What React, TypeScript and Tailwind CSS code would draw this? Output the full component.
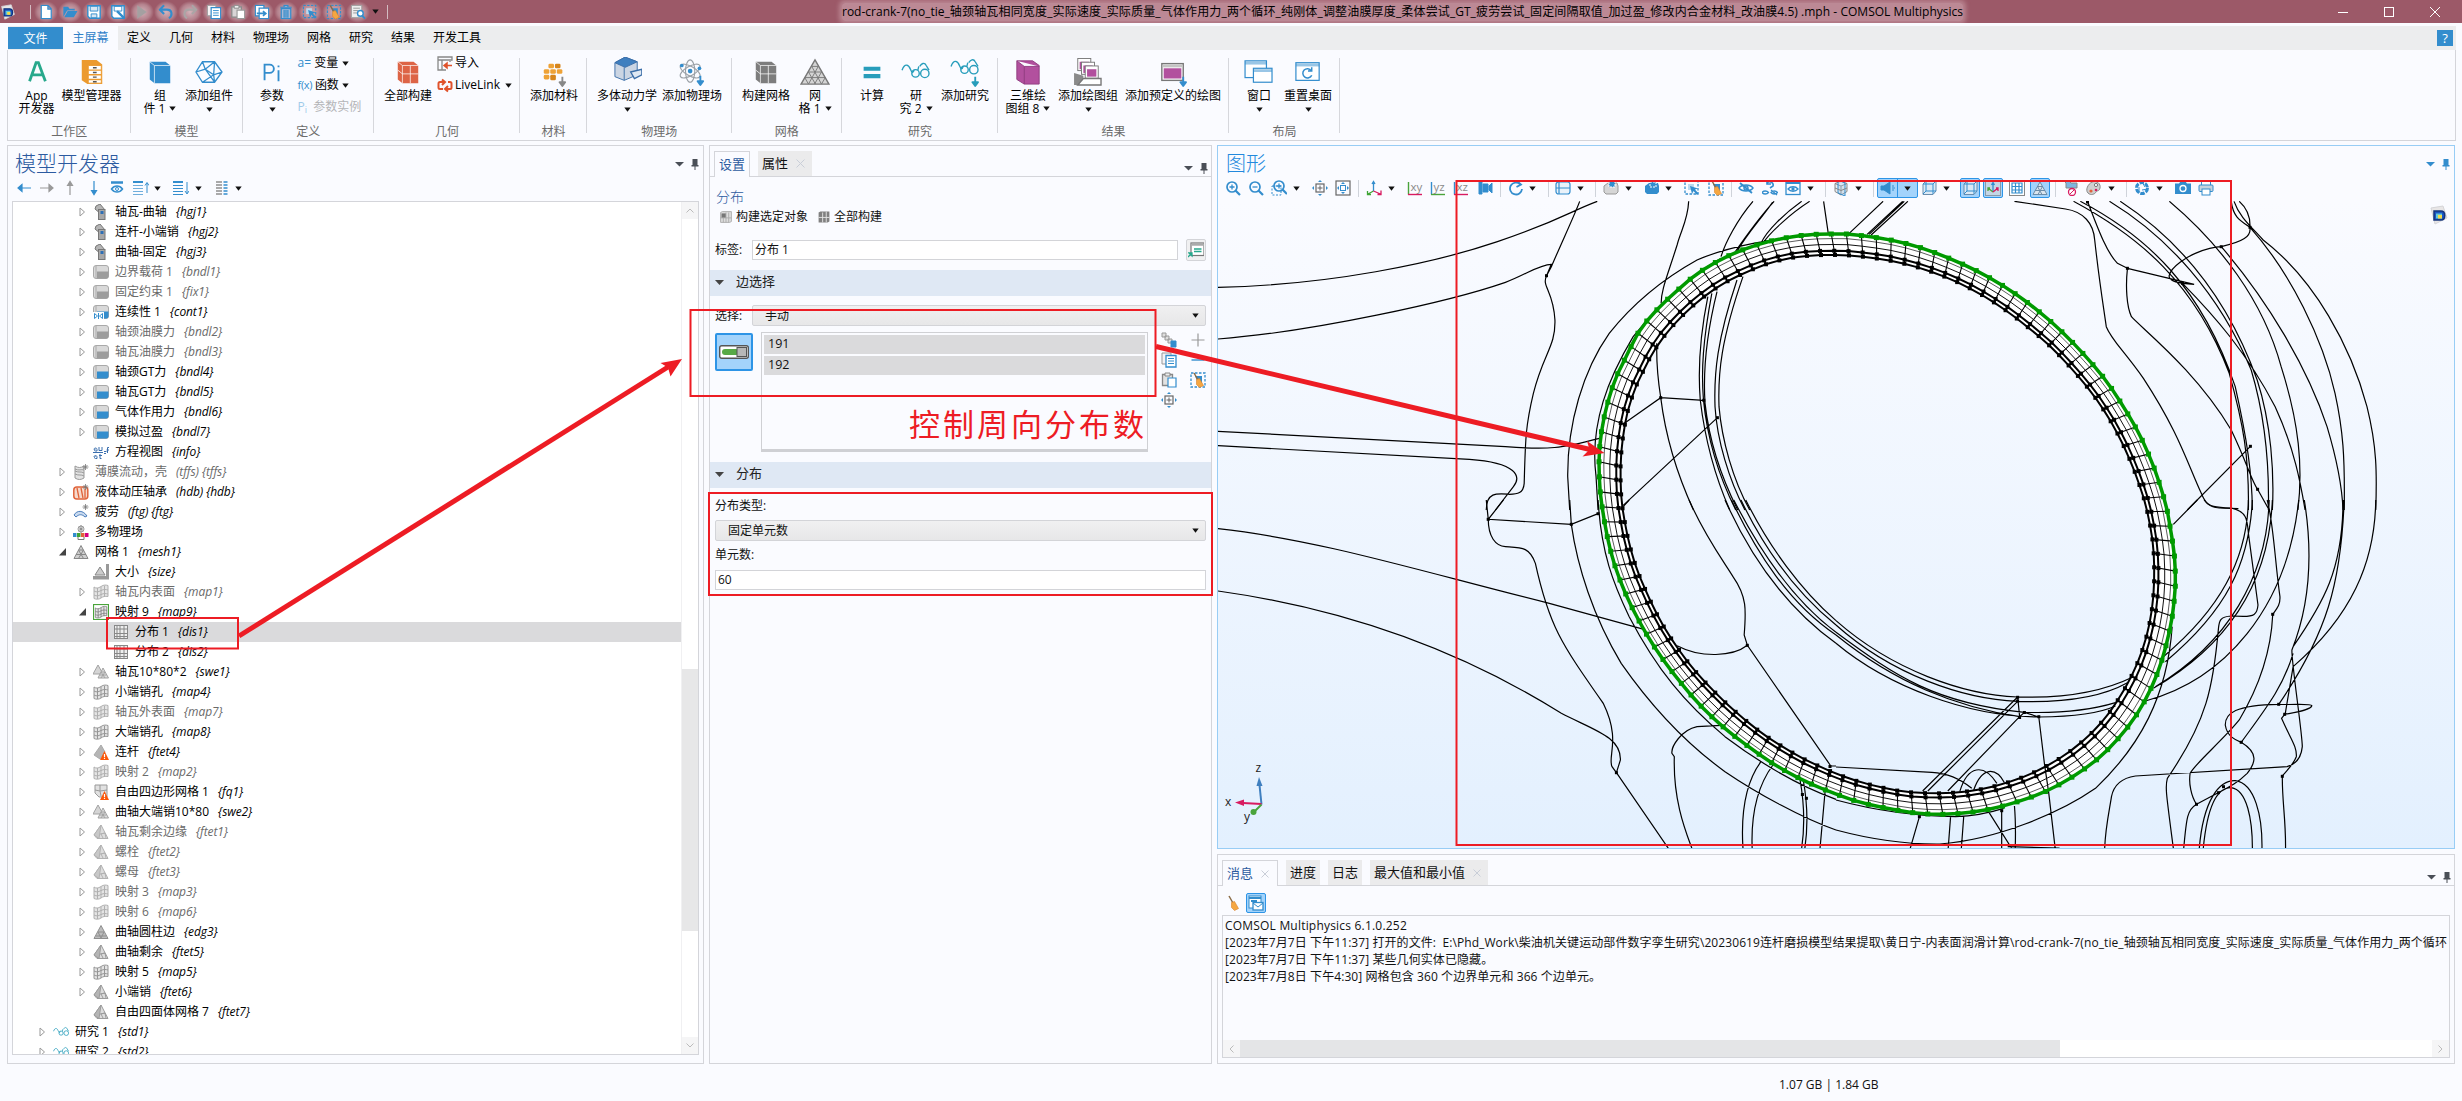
import React from "react";

type P = [number, number];
type Kids = { children?: React.ReactNode };

const BLUE = "#338dcd";
const GRAY = "#8f8f8f";

/* ---------- icon primitives ---------- */

function Svg({ s = 16, children, className = "" }: Kids & { s?: number; className?: string }) {
  return (
    <svg width={s} height={s} viewBox={`0 0 ${s} ${s}`} fill="none" className={`block shrink-0 ${className}`}>
      {children}
    </svg>
  );
}

function Caret({ color = "#111" }: { color?: string }) {
  return (
    <svg width="7" height="5" viewBox="0 0 7 5" className="block shrink-0">
      <path d="M0.3 0.5h6.4L3.5 4.7z" fill={color} />
    </svg>
  );
}

function PanelControls({ color = "#4a4f57" }: { color?: string }) {
  return (
    <div className="flex items-center gap-[7px]">
      <svg width="9" height="5" viewBox="0 0 9 5"><path d="M0 0h9L4.500 4.500z" fill={color} /></svg>
      <svg width="8" height="12" viewBox="0 0 8 12"><path d="M1.500 1h5v6h1v1.500h-3V12h-1V8.500H.5V7h1z" fill={color} /></svg>
    </div>
  );
}

const Cube = ({ c, grid }: { c: string; grid?: boolean }) => (
  <g>
    <path d="M5 5h17l5 4v19H10l-5-4z" fill={c} />
    <path d="M5 5l5 4h17M10 9v19" stroke="#fff" strokeWidth="1" opacity=".75" />
    {grid && <path d="M10 18h17M18.500 9v19M5 14l5 4" stroke="#fff" strokeWidth="1" opacity=".8" />}
  </g>
);

const Glasses = ({ c = "#279dbb" }: { c?: string }) => (
  <g stroke={c} strokeWidth="1.500">
    <path d="M1 14c3-8 7-6 9-1s3 4 4 1M20 10c2-3 5-5 7-1l3 5" />
    <circle cx="15.500" cy="17.500" r="4" />
    <circle cx="25.500" cy="17.500" r="4.500" />
    <path d="M19 10l-1 4" />
  </g>
);

const DownArrow = ({ c = BLUE, x = 24, y = 20 }: { c?: string; x?: number; y?: number }) => (
  <path d={`M${x} ${y}v7M${x - 3} ${y + 6}h6l-3 4z`} fill={c} stroke={c} strokeWidth="2" strokeLinejoin="round" />
);

const BIG: Record<string, React.ReactNode> = {
  app: <path d="M8 26L15 6h2.500L25 26M10.500 19h12" stroke="#27a88c" strokeWidth="3" />,
  manager: (
    <g>
      <path d="M5 3h16l6 5v21H11l-6-4z" fill="#ec9a2e" />
      <path d="M12 9h14v19H12z" fill="#fff" stroke="#ec9a2e" />
      <path d="M12 14h14M12 19h14M12 24h14" stroke="#ec9a2e" strokeWidth="1.500" />
      <path d="M17 11.500h4M17 16.500h4M17 21.500h4M17 26.500h4" stroke="#555" strokeWidth="1.500" />
    </g>
  ),
  cube: <Cube c={BLUE} />,
  addcomp: (
    <path d="M9 5h13l8 11-8 11H9L2 16zM2 16l10-3L22 5M12 13l10 14M12 13L9 5M30 16l-9 3L9 27M21 19l1 8M12 13l9 6M22 5l-1 14" stroke={BLUE} strokeWidth="1.400" />
  ),
  param: <path d="M8 25V8h5.500a4.500 4.500 0 010 9H8M23 14v12M23 9v2" stroke={BLUE} strokeWidth="2" />,
  build: <Cube c="#dd6446" grid />,
  material: (
    <g fill="#eea236">
      <rect x="10" y="7" width="6" height="5" rx="1.500" /><rect x="17" y="7" width="6" height="5" rx="1.500" fill="#d6851c" />
      <rect x="5" y="13" width="6" height="5" rx="1.500" /><rect x="12" y="13" width="6" height="5" rx="1.500" /><rect x="19" y="13" width="6" height="5" rx="1.500" />
      <rect x="5" y="19" width="6" height="5" rx="1.500" /><rect x="12" y="19" width="6" height="6" rx="1.500" fill="#d6851c" />
      <DownArrow c="#888" x={25} y={21} />
    </g>
  ),
  multibody: (
    <g>
      <path d="M3 6l11-6 13 5v14l-14 6L3 21z" fill="#cbd5e3" stroke="#3b6ea8" />
      <path d="M3 6l11-6 13 5-13 6zM13 11v14" fill="#3f7fbf" stroke="#3b6ea8" />
      <path d="M20 16l12-3v6l-8 4z" fill="#dfe8f3" stroke="#3b6ea8" strokeWidth="1.500" />
    </g>
  ),
  physics: (
    <g>
      <g stroke="#9aa0a6" strokeWidth="1.200">
        <ellipse cx="14" cy="15" rx="5" ry="12" /><ellipse cx="14" cy="15" rx="5" ry="12" transform="rotate(60 14 15)" /><ellipse cx="14" cy="15" rx="5" ry="12" transform="rotate(120 14 15)" />
      </g>
      <circle cx="14" cy="15" r="2.500" fill={BLUE} /><circle cx="5" cy="9" r="2" fill={BLUE} /><circle cx="24" cy="12" r="2" fill={BLUE} />
      <DownArrow x={25} y={20} />
    </g>
  ),
  meshbuild: <Cube c="#7d7d7d" grid />,
  mesh: (
    <g stroke="#777" strokeWidth="1">
      <path d="M16 3L31 29H1z" fill="#d4d4d4" strokeWidth="1.500" />
      <path d="M12.500 10h7M9 16h14M5 22h22M12.500 10L23 29M19.500 10L9 29M9 16l7.500 13M23 16l-7.500 13M5 22l4 7M27 22l-4 7" />
    </g>
  ),
  compute: <path d="M7 12.500h18M7 20.500h18" stroke="#279dbb" strokeWidth="4.500" />,
  study: <Glasses />,
  addstudy: <g><g transform="translate(0 -4)"><Glasses /></g><DownArrow c="#279dbb" x={27} y={21} /></g>,
  plot3d: <path d="M4 4h17l7 5v20H12l-8-5zM4 4l8 6h16M12 10v19" fill="#b2509e" stroke="#8f3c80" />,
  plotgroup: (
    <g>
      <path d="M1 17v13h6l4-4V20z" fill="#8a8a8a" />
      <path d="M11 23h19v7H5z" fill="#fff" stroke="#777" strokeWidth="1.500" />
      {[0, 4, 8].map((d) => (
        <g key={d}><rect x={5 + d} y={1.500 + d} width="14" height="13" fill="#fff" stroke="#777" /><rect x={7 + d} y={5 + d} width="10" height="8" fill="#b2509e" /></g>
      ))}
    </g>
  ),
  predefined: (
    <g>
      <rect x="4" y="7" width="23" height="18" fill="#fff" stroke="#777" strokeWidth="1.500" />
      <rect x="5" y="8" width="21" height="3" fill="#c4c4c4" /><rect x="6" y="12" width="19" height="11" fill="#b2509e" />
      <DownArrow x={27} y={21} />
    </g>
  ),
  windows: (
    <g stroke={BLUE} strokeWidth="1.300">
      <rect x="1" y="4" width="23" height="18" fill="#fff" /><path d="M1 6.500h23" strokeWidth="3" opacity=".5" />
      <rect x="10" y="12" width="20" height="15" fill="#fff" /><path d="M10 14.500h20" strokeWidth="3" opacity=".5" />
    </g>
  ),
  reset: (
    <g stroke={BLUE} strokeWidth="1.300">
      <rect x="3" y="6" width="25" height="19" fill="#fff" /><path d="M3 8.500h25" strokeWidth="3" opacity=".5" />
      <path d="M19.500 14.500a5 5 0 10.500 5M20 11v4h-4" strokeWidth="1.600" />
    </g>
  ),
};

/* ---------- small icons ---------- */

const GridCurve = ({ c }: { c: string }) => (
  <g>
    <path d="M1 3c2 1.500 4 1.500 7-.5s5-1.500 7-1v11c-3-.5-5 0-7 1.500s-5 1.500-7 .5z" fill="#e4e4e4" />
    <path d="M1 3c2 1.500 4 1.500 7-.5s5-1.500 7-1v11c-3-.5-5 0-7 1.500s-5 1.500-7 .5zM1 7c3 1.500 4 1 7-.5s5-1 7-.5M1 11c3 1.500 4 1 7-.5s5-1 7-.5M4.500 4v11M8 3v11M11.500 2v11" stroke={c} />
  </g>
);

const Tetra = ({ c, f }: { c: string; f: string }) => (
  <g stroke={c}>
    <path d="M8 1l7 13.500H4L1 11z" fill="#ddd" />
    <path d="M8 1L1 11l5 3.500z" fill={f} />
    <path d="M10 14l-2-4 4-1M7 10l5-1 1 5" />
  </g>
);

const Warn = () => (
  <g><path d="M11.500 7l4.500 9H7z" fill="#fb5607" /><path d="M11.500 10v3M11.500 13.800v1.200" stroke="#fff" strokeWidth="1.200" /></g>
);

const Barrel = ({ c }: { c: string }) => (
  <g>
    <rect x=".5" y="1.500" width="15" height="13" rx="2.500" fill="#d9d9d9" stroke="#a9a9a9" />
    <path d="M4 7.500h11.500V12.500a2 2 0 01-2 2H4z" fill={c} />
    <path d="M3 2v12" stroke="#aaa" />
  </g>
);

const Star = () => <path d="M12.500 0v6M9.500 3h6M10.500 1l4 4M14.500 1l-4 4" stroke="#777" strokeWidth=".8" />;

const TREE: Record<string, React.ReactNode> = {
  hinge: (
    <g stroke="#777"><path d="M3 2l4-2 5 6-4 4-6-5z" fill="#b5b5b5" /><rect x="5.500" y="5.500" width="6.500" height="10" fill="#a8a8a8" /><rect x="7.500" y="7" width="3" height="3" fill="#2e6fb4" stroke="none" /></g>
  ),
  load: <Barrel c={BLUE} />,
  loadOff: <Barrel c="#9d9d9d" />,
  cont: <g><Barrel c={BLUE} /><rect x="0" y="8" width="11" height="8" fill="#fff" /><path d="M1.500 9.500l3 2.500-3 2.500zM9.500 9.500l-3 2.500 3 2.500zM5.500 9v6" stroke={BLUE} /></g>,
  film: <g><path d="M2 2c3 2 6 2 9 0v12c-3 2-6 2-9 0z" fill="#e2e2e2" stroke="#999" /><path d="M2 7c4 2 6 0 9 2M2 10c4 2 6 0 9 2M2 5c4 2 6 0 9 1" stroke="#999" /><Star /></g>,
  bearing: <g><rect x=".8" y="3" width="14" height="12" rx="3" fill="#f6d9cc" stroke="#e0633a" strokeWidth="1.500" /><path d="M4 4l2 10M8 4l2 10M12 5v9" stroke="#e0633a" strokeWidth="1.300" /><Star /></g>,
  fatigue: <g><path d="M1 11c3-5 9-5 13 1l-2 1c-3-3-6-3-9 0z" fill="#c9daef" stroke="#4b7dbb" /><Star /></g>,
  multi: (
    <g><path d="M8 1v8M5 3l6 4M11 3L5 7" stroke="#888" /><circle cx="8" cy="5" r="3" stroke="#999" /><rect x="0" y="9" width="3.500" height="4" fill={BLUE} /><rect x="4" y="9" width="3.500" height="4" fill="#3fa535" /><rect x="8" y="9" width="3.500" height="4" fill="#e0633a" /><rect x="12" y="9" width="3.500" height="4" fill="#d6007f" /><path d="M5 13v2.500h6V13" stroke="#777" /></g>
  ),
  mesh: <g stroke="#888"><path d="M8 1.500l7 13H1z" fill="#cfcfcf" /><path d="M5.500 6h5M3 10.500h10M5.500 6l5 8.500M10.500 6l-5 8.500" /></g>,
  size: <g><path d="M7 3l5 8H2z" fill="#ccc" stroke="#888" /><path d="M0 12h13v3.500H0zM13 0h3v15.500h-3z" fill="#999" /></g>,
  map: <GridCurve c="#969696" />,
  mapOff: <GridCurve c="#b0b0b0" />,
  mapSel: <g><g transform="translate(1.500 1.500) scale(.82)"><GridCurve c="#7d7d7d" /></g><rect x=".5" y=".5" width="15" height="15" stroke="#4aa43b" strokeWidth="1.200" /></g>,
  dist: <g><rect x="1.500" y="1.500" width="13" height="13" fill="#eee" stroke="#888" /><path d="M4 1v14M7 1v14M11 1v14M1 5h14M1 9.500h14M1 12.500h14" stroke="#888" /></g>,
  swe: <g stroke="#a2a2a2"><path d="M5 1l5 9H0z" fill="#d5d5d5" /><path d="M10 4l5.500 10H5z" fill="#dcdcdc" /><path d="M8 8h4M6.500 11h7M8 8l4 6M12 8l-4 6" /></g>,
  tet: <Tetra c="#9c9c9c" f="#b5b5b5" />,
  tetOff: <Tetra c="#b2b2b2" f="#c8c8c8" />,
  tetWarn: <g><path d="M8 1l4 7-5 7-6-4z" fill="#b5b5b5" stroke="#aaa" /><Warn /></g>,
  quad: <g><path d="M2 1h12v12H6L2 9z" fill="#e1e1e1" stroke="#999" /><path d="M2 6l5 1 7-1M7 1v6l1 5" stroke="#999" /><Warn /></g>,
  edge: <g stroke="#8f8f8f"><path d="M8 1.500l7 13H1z" fill="#bdbdbd" /><path d="M5 8l6 0-3 6zM3 12h10" /></g>,
  eq: <g stroke="#3b6fae" strokeWidth="1"><path d="M1 5.500c0-2 3-2 3 0V7H2.500a1 1 0 010-2M6 3v3.500h3V3M0 8.500h10M1 13c0-2 3-2 3 0v1.500H2.500a1 1 0 010-2M7 10v4.500h1.500M6 11.500h3M11 7.500h2.500M11 9.500h2M16 3.500h-1.500V9M13.500 6H16" /></g>,
  study: <g transform="scale(.52) translate(0 0)"><Glasses /></g>,
};

const Broom = () => (
  <g><path d="M4 1l4 7" stroke="#8a6b45" strokeWidth="1.500" /><path d="M6.500 7.500l3-1 4 7-4 2-3-3z" fill="#f5a742" stroke="#d9822b" strokeWidth=".6" /></g>
);
const Mag = () => <g stroke={BLUE} strokeWidth="1.700"><circle cx="7" cy="7" r="5" /><path d="M10.500 10.500L15 15" strokeWidth="2.200" /></g>;
const Plane = ({ t, a, b }: { t: string; a: string; b: string }) => (
  <g><path d="M1.500 2v12.500" stroke={a} strokeWidth="1.400" /><path d="M1 14.500h14" stroke={b} strokeWidth="1.400" /><text x="3.500" y="11" fontSize="11.500" fill="#8a8a8a" fontFamily="Open Sans">{t}</text></g>
);

const SM: Record<string, React.ReactNode> = {
  left: <path d="M15 8H4M6 4.500L2 8l4 3.500z" stroke={BLUE} strokeWidth="1.200" fill={BLUE} />,
  right: <path d="M1 8h11M10 4.500L14 8l-4 3.500z" stroke="#999" strokeWidth="1.200" fill="#999" />,
  up: <path d="M8 15V4M5.500 5.500L8 1.500l2.500 4z" stroke="#999" strokeWidth="1.200" fill="#999" />,
  down: <path d="M8 1v11M5.500 10.500l2.500 4 2.500-4z" stroke={BLUE} strokeWidth="1.200" fill={BLUE} />,
  show: <g stroke={BLUE}><path d="M2 2.500h12" strokeWidth="2.500" /><path d="M2.500 9c3-4 8-4 11 0-3 4-8 4-11 0z" strokeWidth="1.500" /><circle cx="8" cy="9" r="1.500" /></g>,
  collapse: <g stroke={BLUE}><path d="M0 2h10" strokeWidth="2" /><path d="M0 5.500h10M0 8.500h10M0 11.500h10M0 14.500h10" opacity=".7" /><path d="M14 13V3M12 5.500l2-3 2 3" /></g>,
  expand: <g stroke={BLUE}><path d="M0 2h10" strokeWidth="2" /><path d="M0 5.500h10M0 8.500h10M0 11.500h10M0 14.500h10" /><path d="M14 2v11M12 11l2 3 2-3" /></g>,
  cols: <g strokeWidth="1.500"><path d="M3 2h6M3 5h6M3 8h6M3 11h6M3 14h6" stroke={GRAY} /><path d="M10.500 2h4M10.500 5h4M10.500 8h4M10.500 11h4M10.500 14h4" stroke={BLUE} /></g>,
  zin: <g><Mag /><path d="M4.500 7h5M7 4.500v5" stroke={BLUE} strokeWidth="1.300" /></g>,
  zout: <g><Mag /><path d="M4.500 7h5" stroke={BLUE} strokeWidth="1.300" /></g>,
  zbox: <g><rect x="1" y="6" width="9" height="9" stroke={BLUE} strokeDasharray="2 1.500" /><g transform="translate(1 -1)"><Mag /><path d="M4.500 7h5M7 4.500v5" stroke={BLUE} strokeWidth="1.300" /></g></g>,
  zsel: <g><rect x="4" y="4" width="8" height="8" stroke="#666" strokeWidth="1.200" /><path d="M8 5.500v5M5.500 8h5" stroke="#666" /><path d="M6 2l2-2 2 2zM6 14l2 2 2-2zM2 6L0 8l2 2zM14 6l2 2-2 2z" fill={BLUE} /></g>,
  zext: <g><rect x="1" y="1" width="14" height="14" stroke="#666" strokeWidth="1.200" /><rect x="5.500" y="5.500" width="5" height="5" stroke={BLUE} /><path d="M6 4l2-2 2 2zM6 12l2 2 2-2zM4 6L2 8l2 2zM12 6l2 2-2 2z" fill={BLUE} /></g>,
  triad: <g strokeWidth="1.300"><path d="M7.500 11V2M6 4l1.500-2.500L9 4" stroke={BLUE} /><path d="M7.500 11L2 14M1.500 11v3.500h3.500" stroke="#3fa535" /><path d="M7.500 11l7 3M15 10.500v4h-3.500" stroke="#d81b60" /></g>,
  xy: <Plane t="xy" a="#4aa43b" b="#d81b60" />,
  yz: <Plane t="yz" a={BLUE} b="#4aa43b" />,
  xz: <Plane t="xz" a={BLUE} b="#d81b60" />,
  cam2: <path d="M2 2h3v12H2zM6 4h5v8H6zM12 6l3-3v10l-3-3z" fill={BLUE} stroke={BLUE} />,
  rot: <path d="M12 4A6 6 0 1014 9M9 1l4 3.500L8.500 7" stroke={BLUE} strokeWidth="1.800" />,
  barrel: <g stroke={BLUE} strokeWidth="1.200"><rect x="1" y="2" width="14" height="12" rx="2.500" fill="#e9f2fa" /><path d="M4 2v12M1 8h14" /></g>,
  selg: <g><path d="M1 6l4-3h9l1 3v6l-2 2H3l-2-2z" fill="#d6d6d6" stroke="#999" /><rect x="6" y="1" width="6" height="6" fill={BLUE} stroke="#fff" strokeDasharray="2 1" /></g>,
  selb: <g><path d="M1 6l4-3h9l1 3v6l-2 2H3l-2-2z" fill={BLUE} /><rect x="6" y="2" width="6" height="5" fill={BLUE} stroke="#fff" strokeDasharray="2 1" /></g>,
  selarrow: <g><rect x="1" y="1" width="13" height="13" stroke={BLUE} strokeDasharray="2.500 1.500" strokeWidth="1.300" /><path d="M4 4h6v6H4z" fill="#bcd9ee" /><path d="M6 6l8 2.500-3 1 3.500 4-1.500 1.500-3.500-4-1.500 3z" fill={BLUE} /></g>,
  selbroom: <g><rect x="1" y="1" width="14" height="14" stroke={BLUE} strokeDasharray="2.500 1.500" strokeWidth="1.300" /><path d="M5 4h7v7H8z" fill={BLUE} /><Broom /></g>,
  hide: <g stroke={BLUE} strokeWidth="1.400"><path d="M1 8c3-4 11-4 14 0-3 4-11 4-14 0z" /><circle cx="8" cy="8" r="2" /><path d="M2 3l12 10" strokeWidth="1.800" /></g>,
  unhide: <g stroke={BLUE} strokeWidth="1.300"><path d="M5 3c3-3 7 0 6 3L8 8M5 0v4h4" strokeWidth="1.600" /><path d="M0 12.500c1.500-2 5-2 6.500 0-1.500 2-5 2-6.500 0zM9 12.500c1.500-2 5-2 6.500 0-1.500 2-5 2-6.500 0zM9 10l6 5" /></g>,
  view: <g stroke={BLUE} strokeWidth="1.300"><rect x="1" y="1.500" width="14" height="13" /><path d="M1 3h14" strokeWidth="2" /><path d="M3 9c2.500-3 7.500-3 10 0-2.500 3-7.500 3-10 0z" /><circle cx="8" cy="9" r="1" fill={BLUE} /></g>,
  clip: <g><path d="M8 1l6 2.500v8L8 15l-6-3.500v-8zM2 3.500L8 6l6-2.500M8 6v9" fill="#eee" stroke="#888" /><path d="M5 0l7 3v13l-7-3z" stroke={BLUE} fill="#9dc6e8" fillOpacity=".35" /><path d="M2 8l6 2.500L14 8" stroke="#888" /></g>,
  light: <path d="M1 6h3l6-4v12L4 10H1zM12 6l2 0M12 8h3M12 10h2" fill={BLUE} stroke={BLUE} />,
  cube: <g stroke={BLUE}><path d="M2 4l3-3h10v10l-3 3.500H2z" fill="#dceaf6" stroke="#6a8dad" /><path d="M2 4h10v10M12 4l3-3M5 1v10h10M5 11l-3 3" /></g>,
  axes: <g><rect x=".5" y=".5" width="15" height="15" fill="#c3d6e6" stroke="#8a9aa8" /><path d="M8 12V3M6.500 5L8 2.500 9.500 5" stroke={BLUE} strokeWidth="1.300" /><path d="M8 12L3 8M3 11V8h2" stroke="#4aa43b" strokeWidth="1.300" /><path d="M8 12l5-4M13 11V8h-2" stroke="#d81b60" strokeWidth="1.300" /></g>,
  grid: <g><rect x=".5" y=".5" width="15" height="15" stroke="#888" fill="#fff" /><path d="M3 3h10v10H3zM3 6.500h10M3 10h10M6.500 3v10M10 3v10" stroke={BLUE} strokeWidth="1.200" /></g>,
  tri: <g stroke="#6b8ca8"><path d="M8 2l7 12.500H1z" fill="#dbe6ef" /><path d="M5.500 6.500h5M3 10.500h10M5.500 6.500l4.500 8M10.500 6.500L6 14.500" /></g>,
  nomat: <g><path d="M1 1h5l2 2h6v5H3V3z" fill="#7fb6e0" stroke="#888" /><circle cx="9" cy="12" r="3.500" stroke="#d81b60" strokeWidth="1.300" fill="#fff" /><path d="M7 14l4-4" stroke="#d81b60" /></g>,
  palette: <g><path d="M6 2c5-2 9 2 8 6s-3 2-4 4-5 4-8 1S2 4 6 2z" fill="#cfcfcf" stroke="#888" /><circle cx="10" cy="5" r="1.600" fill="#fff" stroke="#777" /><circle cx="5" cy="11" r="1.600" fill="#e0633a" /><circle cx="10" cy="10" r="1.300" fill="#d81b60" /></g>,
  shutter: <g stroke={BLUE} strokeWidth="3"><circle cx="8" cy="8" r="5.500" strokeDasharray="4.500 1.200" /><path d="M8 2l3 5M14 9l-6 1M5 13l0-6" strokeWidth="1" /></g>,
  camera: <g><path d="M0 3.500h4L5.500 1.500h5L12 3.500h4V14H0z" fill={BLUE} /><circle cx="8" cy="8.500" r="3" stroke="#fff" strokeWidth="1.300" /></g>,
  print: <g stroke={BLUE}><path d="M3.500 5V1h9v4" fill="#fff" /><rect x="1" y="5" width="14" height="6.500" rx="1" fill="#c7d3dd" /><rect x="4" y="9" width="8" height="6" fill="#fff" /></g>,
  newdoc: <path d="M3 1h7l3.500 3.500V15H3zM10 1v4h3.500" fill="#fff" stroke={BLUE} strokeWidth="1.300" />,
  open: <path d="M1 13V2.500h5l1.500 2H13v2H5zM5.500 7H16l-4 6.500H2z" fill={BLUE} />,
  save: <g><path d="M1.500 1.500h13v13H3.500l-2-2z" fill="#fff" stroke={BLUE} strokeWidth="1.500" /><path d="M4 2h8v5H4zM5 10h6v4H5z" fill="#d8e7f4" stroke={BLUE} /></g>,
  saveas: <g><path d="M1.500 1.500h13v13H3.500l-2-2z" fill="#fff" stroke={BLUE} strokeWidth="1.500" /><path d="M4 2h8v5H4z" stroke={BLUE} /><path d="M7 7l8 8" stroke={BLUE} strokeWidth="2.500" /></g>,
  play: <path d="M3 1l10 7-10 7z" fill="#a4a0a1" />,
  undo: <path d="M2 5.500h7c6 0 6 7 2 9M6 1L1.500 5.500 6 10" stroke={BLUE} strokeWidth="2.200" />,
  redo: <path d="M14 5.500H7c-6 0-6 7-2 9M10 1l4.500 4.500L10 10" stroke="#aaa5a6" strokeWidth="2.200" />,
  copy: <g stroke={BLUE}><path d="M1 1h9v11H1z" fill="#f5f2f4" stroke="#999" /><path d="M5 3.500h10v11.500H5z" fill="#fff" strokeWidth="1.300" /><path d="M7 6.500h6M7 9h6M7 11.500h6" /></g>,
  paste: <g><path d="M1.500 2.500h10v11h-10z" fill="#d8d5d6" stroke="#888" strokeWidth="1.300" /><path d="M4 1h5v3H4z" fill="#eee" stroke="#888" /><path d="M7 6h8v9H7z" fill="#fff" stroke="#999" strokeWidth="1.200" /></g>,
  pasteb: <g><path d="M1.500 2.500h10v11h-10z" fill="#e2e2e2" stroke="#888" strokeWidth="1.300" /><path d="M4 1h5v3H4z" fill="#eee" stroke="#888" /><path d="M7 6h8v9H7z" fill="#fff" stroke={BLUE} strokeWidth="1.200" /></g>,
  dup: <g stroke={BLUE} strokeWidth="1.300"><path d="M1 1h9v11H1z" fill="#fff" /><path d="M5 4h10v11H5z" fill="#fff" /><path d="M2.500 9.500H11M9 7l3 2.500L9 12" strokeWidth="1.700" /></g>,
  trash: <path d="M2 3h12M6 3V1h4v2M3 4.500h10V15H3zM6 6v8M8 6v8M10 6v8" stroke={BLUE} strokeWidth="1.300" fill="#a8b9d6" />,
  find: <g><path d="M1 1h11v13H1z" fill="#eee" stroke="#999" /><path d="M3 4h7M3 6.500h5M3 9h4" stroke="#999" /><circle cx="10.500" cy="9.500" r="3" stroke={BLUE} strokeWidth="1.500" fill="#fff" /><path d="M12.500 12l3 3" stroke={BLUE} strokeWidth="2" /></g>,
  import: <g><path d="M1 2h14v3H1zM1 2v13h8M5 5v10M13 6v1" stroke="#888" strokeWidth="1.300" /><path d="M15 10.500H8M10 8l-3 2.500L10 13z" fill="#e0532c" stroke="#e0532c" strokeWidth="1.500" /></g>,
  livelink: <path d="M7 5H3a1.500 1.500 0 00-1.500 1.500v4A1.500 1.500 0 003 12h3M5 2.500L8 5 5 8M9 12h4a1.500 1.500 0 001.500-1.500v-4A1.500 1.500 0 0013 5h-2M11 14.500L8 12l3-3" stroke="#e0532c" strokeWidth="2" />,
  bsel: <g><path d="M2 3l2-1h10v11l-2 1H2z" fill="#dedede" stroke="#aaa" /><rect x="3" y="4" width="5" height="5" fill="#777" /><path d="M8 3v11M2 9h12M5 9v5M11 3v11" stroke="#aaa" /></g>,
  ball: <g><path d="M2 3l2-1h10v11l-2 1H2z" fill="#808080" /><path d="M2 8.500h12M6.500 3v11M10.500 2v12" stroke="#e6e6e6" /></g>,
  win: <g><rect x="3" y="1" width="13" height="12.500" fill="#fff" stroke="#777" strokeWidth="1.200" /><path d="M3.500 2.500h12" stroke="#aaa" strokeWidth="2.500" /><path d="M6 7h7.500M6 9.500h7.500" stroke="#27a88c" strokeWidth="1.300" /><path d="M0 15l3-3M1 11h3v3z" stroke="#27a88c" fill="#27a88c" strokeWidth="1.300" /></g>,
  cubes: <g stroke="#999"><path d="M1 1h4v4H1zM4 4h4v4H4zM7 7h4v4H7z" fill="#ddd" /><path d="M10 9h5v6h-5z" fill={BLUE} stroke={BLUE} /></g>,
  plus: <path d="M8 1.500v13M1.500 8h13" stroke="#999" strokeWidth="1.200" />,
  minus: <path d="M1.500 8h13" stroke={BLUE} strokeWidth="1.400" />,
  broom: <Broom />,
  mail: <g stroke={BLUE}><rect x="1" y="1" width="12" height="12" fill="#fff" /><path d="M1 3h12M3 6h6" strokeWidth="2" /><rect x="5" y="7.500" width="10" height="7.500" fill="#fff" strokeWidth="1.300" /><path d="M5 8l5 4 5-4" /></g>,
};

const Logo = ({ s = 20 }: { s?: number }) => (
  <svg width={s} height={s} viewBox="0 0 20 20" className="block shrink-0">
    <path d="M2 3l12-2 4 12-12 6z" fill="#e8e6e6" stroke="#d5d5d8" />
    <path d="M5 6h7c5 0 5 9 0 9H5z" fill="#1a55c4" stroke="#12337a" strokeWidth="1.500" />
    <path d="M7 8.500h6v5H7z" fill="#62c9d8" /><path d="M9 10h4v3.500H9z" fill="#f3dc4a" />
  </svg>
);

/* ---------- shared pieces ---------- */

function Tools({ items }: { items: string[] }) {
  return (
    <div className="flex h-[20px] items-center">
      {items.map((n, i) => {
        if (n === "v") return <span key={i} className="flex w-[17px] shrink-0 pl-[2px]"><Caret /></span>;
        if (n === "|") return <span key={i} className="flex w-[7.500px] shrink-0 justify-center"><i className="h-[17px] w-px bg-[#cfd3da]" /></span>;
        if (n === "[light") return (
          <span key={i} className="flex h-[20px] w-[40.400px] shrink-0 items-center rounded-[2px] border border-[#2d94e6] bg-[#a3d3fb]">
            <span className="flex h-full w-[20px] items-center justify-center border-r border-[#2d94e6]"><Svg>{SM.light}</Svg></span>
            <span className="flex w-[18px] justify-center"><Caret /></span>
          </span>
        );
        const on = n.startsWith("*");
        return (
          <span key={i} className="flex w-[23.400px] shrink-0 justify-center">
            <span className={on ? "flex size-[20px] items-center justify-center rounded-[2px] border border-[#2d94e6] bg-[#a3d3fb]" : "flex"}>
              <Svg>{SM[on ? n.slice(1) : n]}</Svg>
            </span>
          </span>
        );
      })}
    </div>
  );
}

/* ---------- title bar and ribbon ---------- */

const QAT = ["newdoc", "open", "save", "saveas", "play", "undo", "redo", "copy", "paste", "dup", "trash", "selarrow", "selbroom", "find"];

function TitleBar() {
  return (
    <div className="flex h-[23px] shrink-0 items-center overflow-hidden bg-[#9c5968]">
      <div className="flex w-[16px] justify-center"><Logo s={16} /></div>
      <div className="flex w-[826px] shrink-0 items-center pl-[14px]">
        <i className="mr-[3px] h-[14px] w-px bg-[#d3bcc2]" />
        {QAT.map((n) => (
          <span key={n} className="flex w-[24px] justify-center rounded-full bg-[radial-gradient(closest-side,rgba(255,255,255,0.55),rgba(255,255,255,0.25)_70%,transparent)] py-[3px]"><Svg s={16} className="scale-95">{SM[n]}</Svg></span>
        ))}
        <span className="ml-[2px]"><Caret /></span>
        <i className="ml-[8px] h-[14px] w-px bg-[#d3bcc2]" />
      </div>
      <div className="w-[1121px] shrink-0 rounded-[3px] bg-[#c495a0]/80 text-[12px] leading-[18px] whitespace-nowrap text-black shadow-[0_0_4px_3px_rgba(196,149,160,0.7)] [text-align-last:justify]">
        rod-crank-7(no_tie_轴颈轴瓦相同宽度_实际速度_实际质量_气体作用力_两个循环_纯刚体_调整油膜厚度_柔体尝试_GT_疲劳尝试_固定间隔取值_加过盈_修改内合金材料_改油膜4.5) .mph - COMSOL Multiphysics
      </div>
      <div className="ml-auto flex items-center gap-[36px] pr-[22px]">
        <svg width="10" height="10"><path d="M0 5.500h10" stroke="#fff" /></svg>
        <svg width="10" height="10"><rect x=".5" y=".5" width="9" height="9" fill="none" stroke="#fff" /></svg>
        <svg width="10" height="10"><path d="M0 0l10 10M10 0L0 10" stroke="#fff" /></svg>
      </div>
    </div>
  );
}

function MenuTabs() {
  return (
    <div className="mt-[3px] mr-[6px] ml-[8px] flex h-[24px] shrink-0 items-center bg-[#ecedee] text-[12px]">
      <div className="flex h-[22px] w-[55px] items-center justify-center bg-[#338dcd] pt-[2px] text-white">文件</div>
      <div className="flex h-full w-[55px] items-center justify-center bg-[#fafbff] text-[#2e80c8]">主屏幕</div>
      <div className="flex gap-[18px] pl-[9px] text-black">
        {["定义", "几何", "材料", "物理场", "网格", "研究", "结果", "开发工具"].map((t) => <span key={t}>{t}</span>)}
      </div>
      <div className="mr-[3px] ml-auto flex h-[16px] w-[16px] items-center justify-center bg-[#338dcd] text-[13px] leading-none text-white">?</div>
    </div>
  );
}

function Big({ icon, a, b, drop, w }: { icon: string; a: string; b?: string; drop?: boolean; w: string }) {
  return (
    <div className={`flex shrink-0 flex-col items-center ${w}`}>
      <Svg s={32} className="scale-[.93]">{BIG[icon]}</Svg>
      <span className="mt-[1px] leading-[13px] whitespace-nowrap">{a}</span>
      {b && <span className="flex items-center gap-[4px] leading-[13px] whitespace-nowrap">{b}{drop && <Caret />}</span>}
      {!b && drop && <span className="mt-[5px]"><Caret /></span>}
    </div>
  );
}

function Group({ label, w, children }: Kids & { label: string; w: string }) {
  return (
    <div className={`relative flex h-full shrink-0 flex-col ${w}`}>
      <div className="flex h-[74px] items-start pt-[6px]">{children}</div>
      <div className="text-center leading-[15px] text-[#6b6b6b]">{label}</div>
      <i className="absolute top-[8px] right-0 h-[75px] w-px bg-[#d6d7dc]" />
    </div>
  );
}

function Ribbon() {
  return (
    <div className="mr-[6px] ml-[7px] flex h-[91px] shrink-0 border border-t-0 border-[#d4d5da] text-[12px] text-black">
      <Group label="工作区" w="w-[122.500px]"><Big icon="app" a="App" b="开发器" w="w-[57px]" /><Big icon="manager" a="模型管理器" w="w-[53px]" /></Group>
      <Group label="模型" w="w-[112px]"><Big icon="cube" a="组" b="件 1" drop w="w-[59px]" /><Big icon="addcomp" a="添加组件" drop w="w-[39px]" /></Group>
      <Group label="定义" w="w-[131.500px]">
        <div className="pl-[4px]"><Big icon="param" a="参数" drop w="w-[51px]" /></div>
        <div className="flex flex-col leading-[22px] whitespace-nowrap">
          <span className="-mt-[4px] flex items-center gap-[4px]"><span><span className="text-[#338dcd]">a=</span> 变量</span><Caret /></span>
          <span className="flex items-center gap-[4px]"><span className="tracking-[-0.300px]"><span className="text-[11px] text-[#338dcd]">f(x)</span> 函数</span><Caret /></span>
          <span className="text-[#b4b5b8]"><span className="text-[#9fcbea]">P<sub>i</sub></span>&nbsp; 参数实例</span>
        </div>
      </Group>
      <Group label="几何" w="w-[146px]">
        <div className="pl-[8px]"><Big icon="build" a="全部构建" w="w-[52px]" /></div>
        <div className="flex flex-col pl-[3px] leading-[22px] whitespace-nowrap">
          <span className="-mt-[4px] flex items-center gap-[2px]"><Svg>{SM.import}</Svg>导入</span>
          <span className="flex items-center gap-[2px]"><Svg>{SM.livelink}</Svg>LiveLink<span className="ml-[3px]"><Caret /></span></span>
        </div>
      </Group>
      <Group label="材料" w="w-[67px]"><Big icon="material" a="添加材料" w="w-[68px]" /></Group>
      <Group label="物理场" w="w-[144.500px]"><Big icon="multibody" a="多体动力学" drop w="w-[80px]" /><Big icon="physics" a="添加物理场" w="w-[50px]" /></Group>
      <Group label="网格" w="w-[110.500px]"><Big icon="meshbuild" a="构建网格" w="w-[69px]" /><Big icon="mesh" a="网" b="格 1" drop w="w-[29px]" /></Group>
      <Group label="研究" w="w-[156px]"><Big icon="compute" a="计算" w="w-[60px]" /><Big icon="study" a="研" b="究 2" drop w="w-[28px]" /><Big icon="addstudy" a="添加研究" w="w-[70px]" /></Group>
      <Group label="结果" w="w-[231px]"><Big icon="plot3d" a="三维绘" b="图组 8" drop w="w-[60px]" /><Big icon="plotgroup" a="添加绘图组" drop w="w-[60px]" /><Big icon="predefined" a="添加预定义的绘图" w="w-[110px]" /></Group>
      <Group label="布局" w="w-[111px]"><Big icon="windows" a="窗口" drop w="w-[60px]" /><Big icon="reset" a="重置桌面" drop w="w-[38px]" /></Group>
    </div>
  );
}

/* ---------- model tree ---------- */

type Row = [number, "c" | "o" | "", string, string, string, boolean?];
const ROWS: Row[] = [
  [3, "c", "hinge", "轴瓦-曲轴", "{hgj1}"],
  [3, "c", "hinge", "连杆-小端销", "{hgj2}"],
  [3, "c", "hinge", "曲轴-固定", "{hgj3}"],
  [3, "c", "loadOff", "边界载荷 1", "{bndl1}", true],
  [3, "c", "loadOff", "固定约束 1", "{fix1}", true],
  [3, "c", "cont", "连续性 1", "{cont1}"],
  [3, "c", "loadOff", "轴颈油膜力", "{bndl2}", true],
  [3, "c", "loadOff", "轴瓦油膜力", "{bndl3}", true],
  [3, "c", "load", "轴颈GT力", "{bndl4}"],
  [3, "c", "load", "轴瓦GT力", "{bndl5}"],
  [3, "c", "load", "气体作用力", "{bndl6}"],
  [3, "c", "load", "模拟过盈", "{bndl7}"],
  [3, "", "eq", "方程视图", "{info}"],
  [2, "c", "film", "薄膜流动，壳", "(tffs) {tffs}", true],
  [2, "c", "bearing", "液体动压轴承", "(hdb) {hdb}"],
  [2, "c", "fatigue", "疲劳", "(ftg) {ftg}"],
  [2, "c", "multi", "多物理场", ""],
  [2, "o", "mesh", "网格 1", "{mesh1}"],
  [3, "", "size", "大小", "{size}"],
  [3, "c", "mapOff", "轴瓦内表面", "{map1}", true],
  [3, "o", "mapSel", "映射 9", "{map9}"],
  [4, "", "dist", "分布 1", "{dis1}"],
  [4, "", "dist", "分布 2", "{dis2}"],
  [3, "c", "swe", "轴瓦10*80*2", "{swe1}"],
  [3, "c", "map", "小端销孔", "{map4}"],
  [3, "c", "mapOff", "轴瓦外表面", "{map7}", true],
  [3, "c", "map", "大端销孔", "{map8}"],
  [3, "c", "tetWarn", "连杆", "{ftet4}"],
  [3, "c", "mapOff", "映射 2", "{map2}", true],
  [3, "c", "quad", "自由四边形网格 1", "{fq1}"],
  [3, "c", "swe", "曲轴大端销10*80", "{swe2}"],
  [3, "c", "tetOff", "轴瓦剩余边缘", "{ftet1}", true],
  [3, "c", "tetOff", "螺栓", "{ftet2}", true],
  [3, "c", "tetOff", "螺母", "{ftet3}", true],
  [3, "c", "mapOff", "映射 3", "{map3}", true],
  [3, "c", "mapOff", "映射 6", "{map6}", true],
  [3, "c", "edge", "曲轴圆柱边", "{edg3}"],
  [3, "c", "tet", "曲轴剩余", "{ftet5}"],
  [3, "c", "map", "映射 5", "{map5}"],
  [3, "c", "tet", "小端销", "{ftet6}"],
  [3, "", "tet", "自由四面体网格 7", "{ftet7}"],
  [1, "c", "study", "研究 1", "{std1}"],
  [1, "c", "study", "研究 2", "{std2}"],
];
const INDENT = ["", "pl-[23px]", "pl-[43px]", "pl-[63px]", "pl-[83px]"];

function ModelBuilder() {
  return (
    <section className="flex h-[919px] w-[697px] shrink-0 flex-col border border-[#d4d5da] px-[4px]">
      <div className="flex h-[32px] shrink-0 items-center justify-between pt-[4px] pl-[3px]">
        <h2 className="text-[21px] font-light text-[#2c5aa0]">模型开发器</h2>
        <PanelControls />
      </div>
      <div className="shrink-0 pl-0"><Tools items={["left", "right", "up", "down", "show", "collapse", "v", "expand", "v", "cols", "v"]} /></div>
      <div className="mt-[3px] flex h-[854px] shrink-0 border border-[#d4d5da] bg-white">
        <div className="min-w-0 flex-1 overflow-hidden">
          {ROWS.map(([lv, st, ic, name, tag, off], i) => (
            <div key={i} className={`flex h-[20px] items-center text-[12px] whitespace-nowrap ${INDENT[lv]} ${i === 21 ? "bg-[#dadadc]" : ""} ${off ? "text-[#6a6a6a]" : "text-black"}`}>
              <span className="flex w-[17px] shrink-0 pl-[3px]">
                {st === "c" && <svg width="7" height="10" viewBox="0 0 7 10"><path d="M1 1l4.500 4L1 9z" fill="#fff" stroke="#999" /></svg>}
                {st === "o" && <svg width="7" height="8" viewBox="0 0 7 8"><path d="M7 0v7.500H0z" fill="#444" /></svg>}
              </span>
              <Svg>{TREE[ic]}</Svg>
              <span className="ml-[6px]">{name}</span>
              <span className="ml-[9px] tracking-[-0.100px] italic">{tag}</span>
            </div>
          ))}
        </div>
        <div className="flex w-[17px] shrink-0 flex-col items-center border-l border-[#f0f0f2]">
          <div className="flex h-[17px] w-full items-center justify-center bg-[#f5f5f6]"><svg width="8" height="5"><path d="M.5 4.500L4 1l3.500 3.500" stroke="#bbb" fill="none" /></svg></div>
          <div className="mt-[450px] h-[262px] w-full bg-[#e7e7e8]" />
          <div className="mt-auto flex h-[17px] w-full items-center justify-center bg-[#f5f5f6]"><svg width="8" height="5"><path d="M.5 .5L4 4 7.500 .5" stroke="#bbb" fill="none" /></svg></div>
        </div>
      </div>
    </section>
  );
}

/* ---------- settings ---------- */

function Section({ title }: { title: string }) {
  return (
    <div className="flex h-[26px] shrink-0 items-center bg-[#dfe8f4] pb-[2px] pl-[5px] text-[13px] text-[#222]">
      <svg width="9" height="5"><path d="M0 0h9L4.500 5z" fill="#444" /></svg>
      <span className="ml-[12px]">{title}</span>
    </div>
  );
}

function Combo({ text, className = "" }: { text: string; className?: string }) {
  return (
    <div className={`flex h-[21px] items-center justify-between rounded-[2px] border border-[#d3d4d8] bg-gradient-to-b from-[#f0f0f1] to-[#e7e7e8] pr-[6px] pl-[12px] ${className}`}>
      <span>{text}</span>
      <Caret />
    </div>
  );
}

function Settings() {
  return (
    <section className="flex h-[919px] w-[503px] shrink-0 flex-col border border-[#d4d5da] text-[12px] text-[#111]">
      <div className="flex h-[31px] shrink-0 items-end border-b border-[#d4d5da] pr-[3px] pl-[4px] text-[13px]">
        <div className="-mb-px flex h-[26px] w-[36px] items-center justify-center border border-b-0 border-[#d4d5da] bg-[#fafbff] text-[#2c5aa0]">设置</div>
        <div className="ml-[8px] flex h-[25px] w-[54px] items-center bg-[#ebebec] pl-[4px]">属性<svg width="9" height="9" className="ml-[8px]"><path d="M.5 .5l8 8M8.500 .5l-8 8" stroke="#c9ced8" /></svg></div>
        <div className="mb-[2px] ml-auto"><PanelControls /></div>
      </div>
      <div className="mt-[11px] h-[18px] pl-[6px] text-[14px] leading-[18px] font-light text-[#2c5aa0]">分布</div>
      <div className="mt-[2px] flex h-[18px] items-center pl-[8px]">
        <Svg className="scale-90">{SM.bsel}</Svg><span className="ml-[2px]">构建选定对象</span>
        <Svg className="ml-[8px] scale-90">{SM.ball}</Svg><span className="ml-[2px]">全部构建</span>
      </div>
      <div className="mt-[13px] flex h-[22px] items-center pl-[5px]">
        <span className="w-[37px]">标签:</span>
        <div className="flex h-[20px] w-[426px] items-center border border-[#d3d4d8] bg-white pl-[2px]">分布 1</div>
        <div className="ml-[8px] flex h-[22px] w-[20px] items-center justify-center rounded-[2px] border border-[#d3d4d8] bg-[#f0f0f1]"><Svg>{SM.win}</Svg></div>
      </div>
      <div className="mt-[9px]"><Section title="边选择" /></div>
      <div className="mt-[9px] flex h-[21px] items-center pl-[5px]"><span className="w-[37px]">选择:</span><Combo text="手动" className="w-[454px]" /></div>
      <div className="mt-[6px] flex h-[120px] pl-[5px]">
        <div className="mt-[1px] flex size-[38px] shrink-0 items-center justify-center rounded-[2px] border-2 border-[#2d94e6] bg-[#a3d3fb]">
          <svg width="30" height="14"><rect x=".7" y=".7" width="28.600" height="12.600" rx="2" fill="#fff" stroke="#555" strokeWidth="1.400" /><rect x="3" y="4" width="17" height="6" rx="3" fill="#57a946" /><rect x="18" y="2.500" width="9.500" height="9" fill="#b7b7b7" stroke="#555" /></svg>
        </div>
        <div className="ml-[8px] w-[387px] shrink-0 border border-b-[3px] border-[#cfd0d4] bg-[#fafbff] p-[2px] text-[12.500px]">
          <div className="flex h-[19px] items-center bg-[#dadadc] pl-[4px]">191</div>
          <div className="mt-[2px] flex h-[19px] items-center bg-[#dadadc] pl-[4px]">192</div>
        </div>
        <div className="ml-[13px] grid h-[76px] w-[46px] grid-cols-[29px_16px] content-between">
          <Svg>{SM.cubes}</Svg><Svg>{SM.plus}</Svg><Svg>{SM.copy}</Svg><Svg>{SM.minus}</Svg><Svg>{SM.pasteb}</Svg><Svg>{SM.selbroom}</Svg><Svg>{SM.zsel}</Svg>
        </div>
      </div>
      <div className="mt-[10px]"><Section title="分布" /></div>
      <div className="mt-[9px] pl-[5px] leading-[18px]">分布类型:</div>
      <div className="mt-[5px] ml-[5px]"><Combo text="固定单元数" className="w-[491px]" /></div>
      <div className="mt-[5px] pl-[5px] leading-[18px]">单元数:</div>
      <div className="mt-[6px] ml-[5px] flex h-[20px] w-[491px] items-center border border-[#d3d4d8] bg-white pl-[2px]">60</div>
    </section>
  );
}

/* ---------- wireframe geometry ---------- */

const OUTER: P[] = [[1846.4,234],[1816.8,234.3],[1802.8,235.3],[1774.9,240],[1746.9,248.3],[1722,259],[1698,273.3],[1677,290.7],[1657,309.7],[1640,330],[1627,355],[1615,380],[1606.4,407.7],[1601,435],[1599,463],[1600.4,494],[1602.6,510],[1608,540],[1616,569],[1628,599],[1643.5,629],[1660.3,655.7],[1680,681.7],[1701,706],[1724.5,728],[1750,747.7],[1776.9,766],[1804.8,781],[1834,793.3],[1864,803.3],[1907.9,812],[1938.6,814.3],[1967.7,812.7],[1994.9,808],[2022.8,800],[2048.8,790],[2072.7,776.7],[2095.5,760.7],[2115.4,741.7],[2133,720],[2146.6,697.3],[2158.6,670],[2167,641.7],[2172.5,615],[2175.3,586.7],[2175.3,571.7],[2174.5,556.7],[2172.4,540.7],[2167.3,511],[2163.4,496],[2153.4,466],[2140,435.7],[2124,407.7],[2105.5,380],[2084.3,355],[2060.8,330.7],[2036.4,309.5],[2009.7,290],[1980.9,273],[1952,259.500],[1922.6,248.3],[1892.3,240.3],[1862,235.7]];
const INNER: P[] = [[1849,255.4],[1822.8,255],[1794.8,257.3],[1768.9,263.3],[1745,272.7],[1721.8,284.5],[1701,299],[1682.3,315.7],[1665,335],[1651,356],[1639,380],[1634,391.5],[1626.8,415],[1622.4,441.7],[1620.5,468.3],[1621.2,496],[1622.8,510],[1628,538.3],[1636,566.7],[1647,593.3],[1660,620],[1676,645.7],[1694.3,670],[1715,692.3],[1737,713],[1760,731.7],[1785.5,748.5],[1812,763],[1852,779.5],[1893.9,790],[1921.8,793],[1949,793],[1975.7,790.2],[2000.9,784.5],[2025.6,776],[2048.5,765],[2069.5,751.7],[2089.5,735],[2107,715.7],[2121,695],[2133,673],[2142.6,649.3],[2149.4,624],[2153.3,596.7],[2154.2,569],[2152.6,540.7],[2147.5,512.7],[2143.4,497],[2134,470],[2122,442.500],[2107.5,416],[2090.3,391],[2070.3,367.3],[2048.8,345],[2024.8,324.8],[2000.5,306.7],[1974.9,291],[1947.8,278],[1919.8,268],[1891.9,261],[1863,256.7]];

function smooth(pts: P[]): P[] {
  const n = pts.length;
  const out: P[] = [];
  for (let i = 0; i < n; i++) {
    const [a, b, c, d] = [pts[(i + n - 1) % n], pts[i], pts[(i + 1) % n], pts[(i + 2) % n]];
    for (let k = 0; k < 6; k++) {
      const t = k / 6;
      const f = (j: 0 | 1) => 0.5 * (2 * b[j] + (c[j] - a[j]) * t + (2 * a[j] - 5 * b[j] + 4 * c[j] - d[j]) * t * t + (3 * b[j] - a[j] - 3 * c[j] + d[j]) * t * t * t);
      out.push([f(0), f(1)]);
    }
  }
  return out;
}

function resample(pts: P[], count: number): P[] {
  const closed = [...pts, pts[0]];
  const acc = [0];
  for (let i = 1; i < closed.length; i++) acc.push(acc[i - 1] + Math.hypot(closed[i][0] - closed[i - 1][0], closed[i][1] - closed[i - 1][1]));
  const total = acc[acc.length - 1];
  const out: P[] = [];
  let j = 1;
  for (let k = 0; k < count; k++) {
    const s = (total * k) / count;
    while (acc[j] < s) j++;
    const t = (s - acc[j - 1]) / (acc[j] - acc[j - 1] || 1);
    out.push([closed[j - 1][0] + (closed[j][0] - closed[j - 1][0]) * t, closed[j - 1][1] + (closed[j][1] - closed[j - 1][1]) * t]);
  }
  return out;
}

const toPath = (p: P[]) => "M" + p.map(([x, y]) => `${x.toFixed(1)},${y.toFixed(1)}`).join("L") + "Z";
const O = resample(smooth(OUTER), 120);
const N = resample(smooth(INNER), 120);
const mix = (t: number): P[] => N.map((p, i) => [p[0] + (O[i][0] - p[0]) * t, p[1] + (O[i][1] - p[1]) * t]);
const IN2 = mix(0.2);

const TL = "M20,442C300,435 560,370 720,305S900,215 970,184M20,597C260,575 600,485 740,427C790,405 825,373 855,373L843,407M926,184C915,220 880,310 855,380L843,407C830,440 860,450 864,540C866,620 835,640 810,760C790,860 790,900 787,1030C785,1060 770,1063 750,1063C720,1060 692,1055 692,1110M20,874L740,920C850,930 880,925 975,895M20,917L650,958C770,968 780,1010 760,1040L715,1110M1199,184C1197,240 1180,270 1170,315C1145,410 1130,450 1130,490M1119,610C1118,670 1122,720 1129,773C1140,880 1165,990 1211,1110M1038,850L1129,773L1237,781M1271,833L1035,1096M1247,470C1225,600 1222,690 1228,780C1240,900 1265,1010 1302,1110M1257,460C1235,600 1230,690 1236,780C1246,900 1275,1010 1317,1110M1270,455C1240,600 1235,700 1240,790C1250,900 1280,1010 1322,1110M1320,420C1270,600 1262,700 1265,800C1270,900 1300,1020 1340,1110M1335,410C1280,600 1272,700 1275,800C1282,900 1310,1020 1352,1110M1360,184C1320,240 1290,310 1280,350M1413,184C1370,240 1330,310 1310,345M1409,187C1375,245 1345,280 1320,335M1482,184C1440,220 1395,270 1380,310M1502,184C1455,220 1400,280 1385,310M1537,184L1549,283M1530,284C1420,292 1300,318 1220,360C1130,420 1060,490 1000,580C935,690 895,850 896,1010L901,1110M1280,355C1200,410 1120,500 1060,590C1000,710 950,850 967,1010L972,1110";
const TR = "M118,184L33,280M167,184L78,283M171,184L83,283M180,184L88,285M447,184L575,207C620,215 645,250 648,300C660,430 670,500 677,560C690,600 720,630 770,715C860,880 880,970 915,1060C925,1090 935,1102 960,1104L1008,1106M630,184C660,280 680,340 705,370L730,385C725,440 728,500 740,530C770,570 900,690 990,870C1030,970 1040,1020 1056,1048L1085,1110M730,385L897,433L868,430M868,430C840,425 832,415 835,405C840,380 880,350 900,340C930,325 945,320 965,320C1020,305 1040,290 1037,262C1038,230 1030,205 1010,184M595,184C760,290 900,430 985,700C1020,850 1035,950 1033,1110M612,184C780,290 915,440 1000,740C1030,900 1042,1000 1043,1110M685,184C830,290 960,460 1040,690C1080,850 1085,1000 1083,1110M712,184C860,300 980,470 1055,720C1090,850 1098,1000 1093,1110M835,184C960,310 1070,480 1115,680C1160,850 1170,980 1157,1110M868,430C950,530 1030,640 1100,800C1150,930 1165,1040 1175,1110M965,320C1080,480 1180,680 1230,860C1260,980 1268,1050 1270,1110M990,184C995,230 1010,240 1037,262C1140,400 1220,600 1250,760C1270,870 1275,950 1273,1110M997,184C1010,230 1040,260 1070,300C1200,420 1290,620 1330,800C1355,920 1355,1000 1352,1110M1038,919L880,1110";
const BL = "M692,0L697,58C697,110 715,138 740,140C780,143 800,140 815,190C850,380 880,430 985,610C1030,720 995,770 1007,800L1018,818L1148,1045M735,0L697,58L905,73L972,41M1200,0C1240,110 1290,190 1310,230C1345,290 1343,330 1338,405L1346,436L1555,798H1568M20,86C280,120 530,215 850,310L1087,388M20,273C300,320 600,430 880,640C960,690 1030,710 1028,780L1018,818M1170,437C1230,475 1310,470 1346,436M1280,676L1220,680C1180,690 1155,740 1157,760L1163,770C1160,900 1190,990 1207,1045M1380,785C1340,850 1330,950 1335,1045M1410,795C1370,860 1355,950 1358,1045M1478,840C1490,920 1490,980 1482,1045M1486,840C1498,920 1498,980 1490,1045M1541,870L1528,1045M1050,0L1035,20M901,0L905,73C920,200 960,350 1030,490C1100,610 1180,720 1290,815C1370,880 1487,957 1568,990M972,0C980,160 1010,250 1050,350C1120,510 1190,610 1290,710C1390,800 1480,860 1568,898M1290,0C1350,160 1440,320 1568,430M1306,0C1370,160 1450,310 1568,405M1312,0C1380,160 1460,300 1568,397M1330,0C1390,150 1470,280 1568,375M1342,0C1400,140 1480,270 1568,362";
const BR = "M0,362C140,510 320,585 455,591C560,595 660,580 745,530M0,375C140,525 320,598 455,604C560,608 660,595 730,548M0,397C150,530 250,610 472,637C560,640 640,630 700,608M0,405C150,550 300,620 460,650M0,430C130,560 330,650 508,651C600,650 660,640 700,618M922,0C935,20 950,23 990,24C1030,35 1030,60 1033,100L1057,315C1055,345 1045,349 1020,349L990,348C960,350 960,365 958,385C945,560 930,660 830,835C824,860 827,880 845,1045M1080,0C1095,60 1100,190 1112,290C1113,315 1105,325 1094,343C1090,450 1060,560 1010,660C970,720 900,790 887,820C883,850 890,890 903,913M905,0L845,73M1033,0C1030,180 960,330 820,470M1043,0C1035,190 980,330 825,485M1085,0C1080,230 980,430 800,560M1093,0C1085,240 990,430 795,565M1159,0C1130,330 970,540 775,603M1173,0C1200,200 1175,350 1142,450C1140,480 1168,700 1168,740C1165,780 1145,795 1130,800L750,828C710,835 695,860 690,890C685,930 675,980 673,1045M1270,0C1270,210 1220,310 1145,440M1273,0C1265,250 1230,400 1109,613M1352,0C1350,190 1290,350 1145,500L1125,643M1109,613C1150,615 1190,610 1192,617C1190,630 1150,637 1124,643L1116,655C1140,720 1155,740 1153,770C1145,795 1130,810 1118,828C1117,900 1127,960 1126,1045M1109,613C1000,615 975,640 975,675C980,710 1000,720 1015,727C1060,760 1050,790 1030,820C1000,855 985,860 903,913C880,930 878,950 871,1045M1145,460C1120,560 1080,620 1015,727M910,1045C920,900 960,840 1000,842C1050,850 1068,950 1067,1045M920,1045C930,920 955,862 990,863C1030,870 1043,960 1043,1045M455,591L217,873M455,604L230,873M460,650L280,873M508,651L522,790L533,880L549,1045M455,591L460,650L472,637L508,651M310,875C330,795 370,790 403,850M345,870C365,800 400,800 422,848M0,801L240,817C290,820 320,845 340,865M209,950L186,1045M287,950L281,1045M320,948L314,1045M382,935L440,1045M415,930V1045M447,918C450,960 450,1000 449,1045M430,1040L560,1044M0,990C100,1022 180,1033 260,1032C400,1020 560,940 650,865C760,740 830,590 842,380M0,900C100,932 210,949 300,950C350,948 380,940 420,925";
const DOTS: P[] = [[1546.5,275.7],[1660.7,397.7],[1703.8,400.3],[1717.4,417.7],[2127.4,268.3],[2250,227.3],[2221.2,246.7],[2182.5,283.3],[2087.5,202],[2250.4,446.3],[2257.6,489.3],[1488.2,519.3],[1571.3,524.3],[1598,513.7],[1747.3,645.3],[1616.4,772.7],[1830,766.5],[2017.6,697.3],[2017.6,701],[2024.4,712.500],[2019.6,717.500],[2038.8,716.7],[2272.7,614.3],[2278.7,704.3],[2284.7,714.3],[2241.2,742.3],[2282.3,776.3],[2196.5,804.3],[2218.4,792.7],[2223.500,786.7],[1802.4,794.500],[1806.4,798.300],[1919.4,816.7],[2001.7,810.7]];
const WIRES: [string, string][] = [
  ["translate(1210 140) scale(.39923 .33333)", TL],
  ["translate(1836 140) scale(.39923 .33333)", TR],
  ["translate(1210 500) scale(.39923 .33333)", BL],
  ["translate(1836 500) scale(.39923 .33333)", BR],
];

function Wireframe() {
  return (
    <svg viewBox="1218 201 1236 647" width="1236" height="647" fill="none" className="block">
      <defs>
        <linearGradient id="sky" x1="0" y1="0" x2="0" y2="1"><stop offset="0" stopColor="#fafbff" /><stop offset="1" stopColor="#e3f0fe" /></linearGradient>
      </defs>
      <rect x="1218" y="201" width="1236" height="647" fill="url(#sky)" />
      <path d={toPath(O) + toPath(N)} fill="#fff" fillRule="evenodd" />
      {WIRES.map(([t, d]) => (
        <g key={t} transform={t}><path d={d} stroke="#000" strokeWidth="1.200" vectorEffect="non-scaling-stroke" /></g>
      ))}
      <path d={toPath(mix(0.5))} stroke="#111" />
      <path d={toPath(mix(0.78))} stroke="#333" strokeWidth=".8" />
      <path d={N.map((p, i) => `M${p[0].toFixed(1)},${p[1].toFixed(1)}L${O[i][0].toFixed(1)},${O[i][1].toFixed(1)}`).join("")} stroke="#000" strokeWidth="1.100" />
      <path d={toPath(N)} stroke="#000" strokeWidth="2" />
      <path d={toPath(IN2)} stroke="#000" strokeWidth="2" />
      <path d={toPath(O)} stroke="#009a00" strokeWidth="3.500" />
      {O.map(([x, y], i) => <rect key={i} x={x - 2.500} y={y - 2.500} width="5" height="5" fill="#009a00" />)}
      {[...N, ...IN2].map(([x, y], i) => <rect key={i} x={x - 2} y={y - 2} width="4" height="4" fill="#000" />)}
      {DOTS.map(([x, y], i) => <rect key={i} x={x - 1.500} y={y - 1.500} width="3" height="3" fill="#000" />)}
      <path d="M1261.500 804.500L1259.500 785" stroke="#3f7fbf" strokeWidth="2" /><path d="M1256.500 786l2.500-9 3.500 9z" fill="#3f7fbf" />
      <path d="M1261.500 804L1243 803" stroke="#d81b60" strokeWidth="2" /><path d="M1244 799.500l-9 3 9 3.500z" fill="#d81b60" />
      <path d="M1261.500 804.500L1254 812" stroke="#4aa43b" strokeWidth="2" /><circle cx="1253.500" cy="812" r="3" fill="#4aa43b" />
      <g fontSize="12" fill="#222" fontFamily="Open Sans"><text x="1255.500" y="772">z</text><text x="1225" y="806">x</text><text x="1244" y="821">y</text></g>
    </svg>
  );
}

const GTOOLS = ["zin", "zout", "zbox", "v", "zsel", "zext", "|", "triad", "v", "xy", "yz", "xz", "cam2", "|", "rot", "v", "|", "barrel", "v", "|", "selg", "v", "selb", "v", "selarrow", "selbroom", "|", "hide", "unhide", "view", "v", "|", "clip", "v", "|", "[light", "cube", "v", "*cube", "*axes", "grid", "*tri", "|", "nomat", "palette", "v", "|", "shutter", "v", "camera", "print"];

function Graphics() {
  return (
    <section className="relative flex h-[704px] w-[1238px] shrink-0 flex-col border border-[#98cdf5]">
      <div className="flex h-[32px] shrink-0 items-center justify-between pt-[4px] pr-[4px] pl-[8px]">
        <h2 className="text-[20px] font-light text-[#2289dd]">图形</h2>
        <PanelControls color={BLUE} />
      </div>
      <div className="h-[23px] shrink-0 pl-[3px]"><Tools items={GTOOLS} /></div>
      <Wireframe />
      <div className="absolute top-[59px] right-[5px]"><Logo /></div>
    </section>
  );
}

/* ---------- messages ---------- */

const X = () => <svg width="8" height="8"><path d="M.5 .5l7 7M7.500 .5l-7 7" stroke="#c9ced8" /></svg>;

function Messages() {
  return (
    <section className="mt-[5px] flex h-[210px] w-[1238px] shrink-0 flex-col border border-[#d4d5da] text-[12px] text-[#111]">
      <div className="flex h-[31px] shrink-0 items-end border-b border-[#d4d5da] pr-[3px] pl-[4px] text-[13px]">
        <div className="-mb-px flex h-[26px] w-[56px] items-center gap-[8px] border border-b-0 border-[#d4d5da] bg-[#fafbff] pl-[4px] text-[#2c5aa0]">消息<X /></div>
        <div className="ml-[8px] flex h-[25px] w-[34px] items-center justify-center bg-[#ebebec]">进度</div>
        <div className="ml-[8px] flex h-[25px] w-[34px] items-center justify-center bg-[#ebebec]">日志</div>
        <div className="ml-[8px] flex h-[25px] w-[118px] items-center gap-[8px] bg-[#ebebec] pl-[4px]">最大值和最小值<X /></div>
        <div className="mb-[2px] ml-auto"><PanelControls /></div>
      </div>
      <div className="flex h-[29px] shrink-0 items-center pt-[4px] pl-[7px]">
        <Svg>{SM.broom}</Svg>
        <span className="ml-[5px] flex size-[20px] items-center justify-center rounded-[2px] border border-[#2d94e6] bg-[#a3d3fb]"><Svg>{SM.mail}</Svg></span>
      </div>
      <div className="mx-[4px] flex h-[143px] flex-col border border-[#d4d5da]">
        <div className="flex-1 overflow-hidden pt-[1px] pl-[2px] leading-[17px] tracking-[0.080px] whitespace-nowrap">
          <div className="tracking-[0.200px]">COMSOL Multiphysics 6.1.0.252</div>
          <div>[2023年7月7日 下午11:37] 打开的文件:&nbsp; E:\Phd_Work\柴油机关键运动部件数字孪生研究\20230619连杆磨损模型结果提取\黄日宁-内表面润滑计算\rod-crank-7(no_tie_轴颈轴瓦相同宽度_实际速度_实际质量_气体作用力_两个循环</div>
          <div>[2023年7月7日 下午11:37] 某些几何实体已隐藏。</div>
          <div>[2023年7月8日 下午4:30] 网格包含 360 个边界单元和 366 个边单元。</div>
        </div>
        <div className="flex h-[17px] shrink-0 items-center bg-white">
          <div className="flex h-full w-[17px] items-center justify-center bg-[#f5f5f6]"><svg width="5" height="8"><path d="M4.500 .5L1 4l3.500 3.500" stroke="#bbb" fill="none" /></svg></div>
          <div className="h-full w-[820px] bg-[#e4e5e7]" />
          <div className="ml-auto flex h-full w-[17px] items-center justify-center bg-[#f5f5f6]"><svg width="5" height="8"><path d="M.5 .5L4 4 .5 7.500" stroke="#bbb" fill="none" /></svg></div>
        </div>
      </div>
    </section>
  );
}

/* ---------- red mark-up over the window ---------- */

function Markup() {
  return (
    <div className="pointer-events-none absolute inset-0">
      <svg width="2462" height="1101" viewBox="0 0 2462 1101" fill="none" className="absolute inset-0">
        <g stroke="#ed1c24" strokeWidth="2">
          <rect x="107" y="618" width="131" height="30.500" />
          <rect x="690.500" y="310" width="465" height="86" />
          <rect x="709" y="493" width="503" height="102" />
          <rect x="1456.500" y="181" width="774.500" height="664" />
        </g>
        <g stroke="#ed1c24" strokeWidth="5"><path d="M239 636L668 367" /><path d="M1156 346.500L1590 449.500" /></g>
        <g fill="#ed1c24"><path d="M682 359l-21.500 4 7.500 4.500 2.500 9z" /><path d="M1604.500 453l-17.500-12 2.500 8.500-7 7z" /></g>
      </svg>
      <div className="absolute top-[402px] left-[909px] text-[31px] leading-[44px] tracking-[3px] whitespace-nowrap text-[#ed1c24]">控制周向分布数</div>
    </div>
  );
}

export default function App() {
  return (
    <div className="relative flex h-[1101px] w-[2462px] flex-col overflow-hidden bg-[#fafbff] [font-family:'Open_Sans','Noto_Sans_CJK_SC',sans-serif]">
      <TitleBar />
      <MenuTabs />
      <Ribbon />
      <div className="mt-[4px] flex shrink-0 gap-[5px] pl-[7px]">
        <ModelBuilder />
        <Settings />
        <div className="flex flex-col"><Graphics /><Messages /></div>
      </div>
      <div className="flex flex-1 items-center pt-[4px] pl-[1779px] text-[12px] whitespace-nowrap text-[#111]">1.07 GB | 1.84 GB</div>
      <Markup />
    </div>
  );
}
